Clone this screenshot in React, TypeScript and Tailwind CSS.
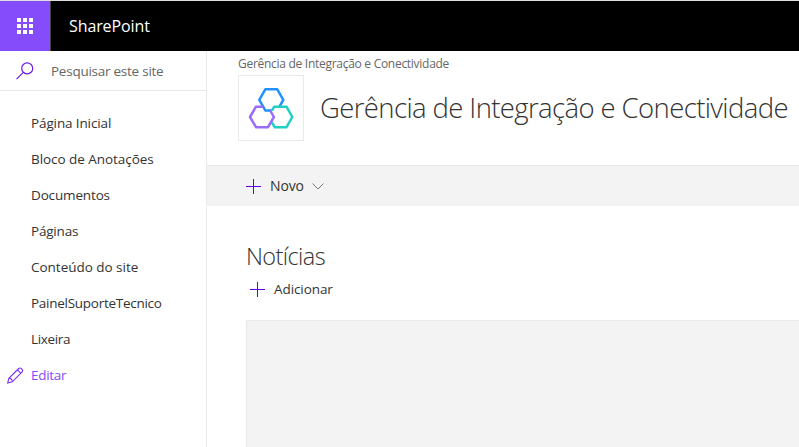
const navItems = [
  { label: "Página Inicial", tracking: "tracking-[-0.12px]" },
  { label: "Bloco de Anotações", tracking: "tracking-[-0.05px]" },
  { label: "Documentos", tracking: "tracking-[-0.15px]" },
  { label: "Páginas", tracking: "tracking-[-0.2px]" },
  { label: "Conteúdo do site", tracking: "tracking-[-0.02px]" },
  { label: "PainelSuporteTecnico", tracking: "tracking-[-0.27px]" },
  { label: "Lixeira", tracking: "tracking-[-0.35px]" },
];

function Waffle() {
  return (
    <div className="grid grid-cols-3 gap-[2px]">
      {Array.from({ length: 9 }, (_, i) => (
        <span key={i} className="size-1 bg-white" />
      ))}
    </div>
  );
}

function SearchIcon() {
  return (
    <svg width="18" height="18" viewBox="0 0 18 18" fill="none" stroke="#6b1be8" strokeWidth="1.2" className="shrink-0">
      <circle cx="11.2" cy="6.4" r="5.5" />
      <path d="M7.3 10.3 0.5 17.1" />
    </svg>
  );
}

function PencilIcon() {
  return (
    <svg width="17" height="17" viewBox="0 0 17 17" fill="none" stroke="#7a30f3" strokeWidth="1.1" className="shrink-0">
      <path d="M0.7 16 1.9 11.3 11.7 1.5C13.5 -0.1 16.7 3 15.1 5L5.3 14.8Z" />
      <path d="M1.9 11.3C3.9 11.4 5.2 12.8 5.3 14.8M10.4 2.8 13.8 6.2" />
    </svg>
  );
}

function PlusIcon() {
  return (
    <svg width="15" height="15" viewBox="0 0 15 15" fill="#6200ee" className="shrink-0">
      <path d="M7 0H8V7H15V8H8V15H7V8H0V7H7Z" />
    </svg>
  );
}

function SiteLogo() {
  return (
    <svg width="46" height="42" viewBox="0 0 46 42" fill="none" strokeWidth="2.5" strokeLinejoin="round" className="translate-y-px">
      <path d="M31.4 18.7 35.3 11.8 29.3 1.3H17.3L11.3 11.8 17.3 22.4H23.5" stroke="#2291ff" />
      <path d="M24 22.6 26.2 18.7H38.5L44.3 29 38.5 39.2H26.7L23.6 34" stroke="#22cfc4" />
      <path d="M15.2 18.7H8L2 29 8 39.2H20L25.9 29 22.2 22.5" stroke="#9b6bfa" />
    </svg>
  );
}

export default function App() {
  return (
    <div className="flex h-[447px] w-[799px] flex-col overflow-hidden whitespace-nowrap border-t border-[#dedede] bg-white font-['Open_Sans','Noto_Sans',sans-serif] text-[#333]">
      <header className="flex h-[50px] shrink-0 bg-black">
        <div className="flex w-[51px] items-center justify-center border-r border-[#444] bg-[#854cfb]">
          <Waffle />
        </div>
        <span className="pl-[18px] text-base leading-[50px] tracking-[-0.1px] text-white">SharePoint</span>
      </header>
      <div className="flex min-h-0 flex-1">
        <aside className="w-[207px] shrink-0 border-r border-[#eaeaea]">
          <div className="flex h-10 items-center border-b border-[#eaeaea] pl-4">
            <SearchIcon />
            <span className="pl-[17px] pt-px text-[13.5px] tracking-[-0.25px] text-[#666]">Pesquisar este site</span>
          </div>
          <nav className="pt-3.5 text-[13.5px]">
            {navItems.map((item) => (
              <a key={item.label} className={`flex h-9 items-center pl-[31px] ${item.tracking}`}>
                {item.label}
              </a>
            ))}
            <a className="flex h-9 items-center gap-[7px] pl-[7px] tracking-[-0.3px] text-[#854cfb]">
              <PencilIcon />
              Editar
            </a>
          </nav>
        </aside>
        <main className="min-w-0 flex-1">
          <div className="h-[114px] pl-[31px] pt-1">
            <div className="h-5 text-xs leading-[18px] tracking-[-0.28px] text-[#666]">Gerência de Integração e Conectividade</div>
            <div className="flex items-center">
              <div className="flex size-[66px] shrink-0 items-center justify-center border border-[#eaeaea]">
                <SiteLogo />
              </div>
              <h1 className="pl-4 text-[27.5px] font-light leading-9 tracking-[-0.61px]">Gerência de Integração e Conectividade</h1>
            </div>
          </div>
          <div className="flex h-[41px] items-center border-t border-[#eaeaea] bg-[#f3f3f3] pl-[39px] text-sm">
            <PlusIcon />
            <span className="pl-[9px] tracking-[-0.15px]">Novo</span>
            <svg width="12" height="7" viewBox="0 0 12 7" fill="none" stroke="#777" className="ml-2">
              <path d="M0.5 0.5 6 6 11.5 0.5" />
            </svg>
          </div>
          <section className="pl-[39px] pt-[34px]">
            <h2 className="h-8 text-[23.5px] font-light leading-8 tracking-[-0.6px]">Notícias</h2>
            <div className="flex h-[34px] items-center pl-1 text-[13.5px]">
              <PlusIcon />
              <span className="pl-[9px] tracking-[-0.08px]">Adicionar</span>
            </div>
            <div className="mt-3.5 h-[140px] border-l border-t border-[#eaeaea] bg-[#f3f3f3]" />
          </section>
        </main>
      </div>
    </div>
  );
}
